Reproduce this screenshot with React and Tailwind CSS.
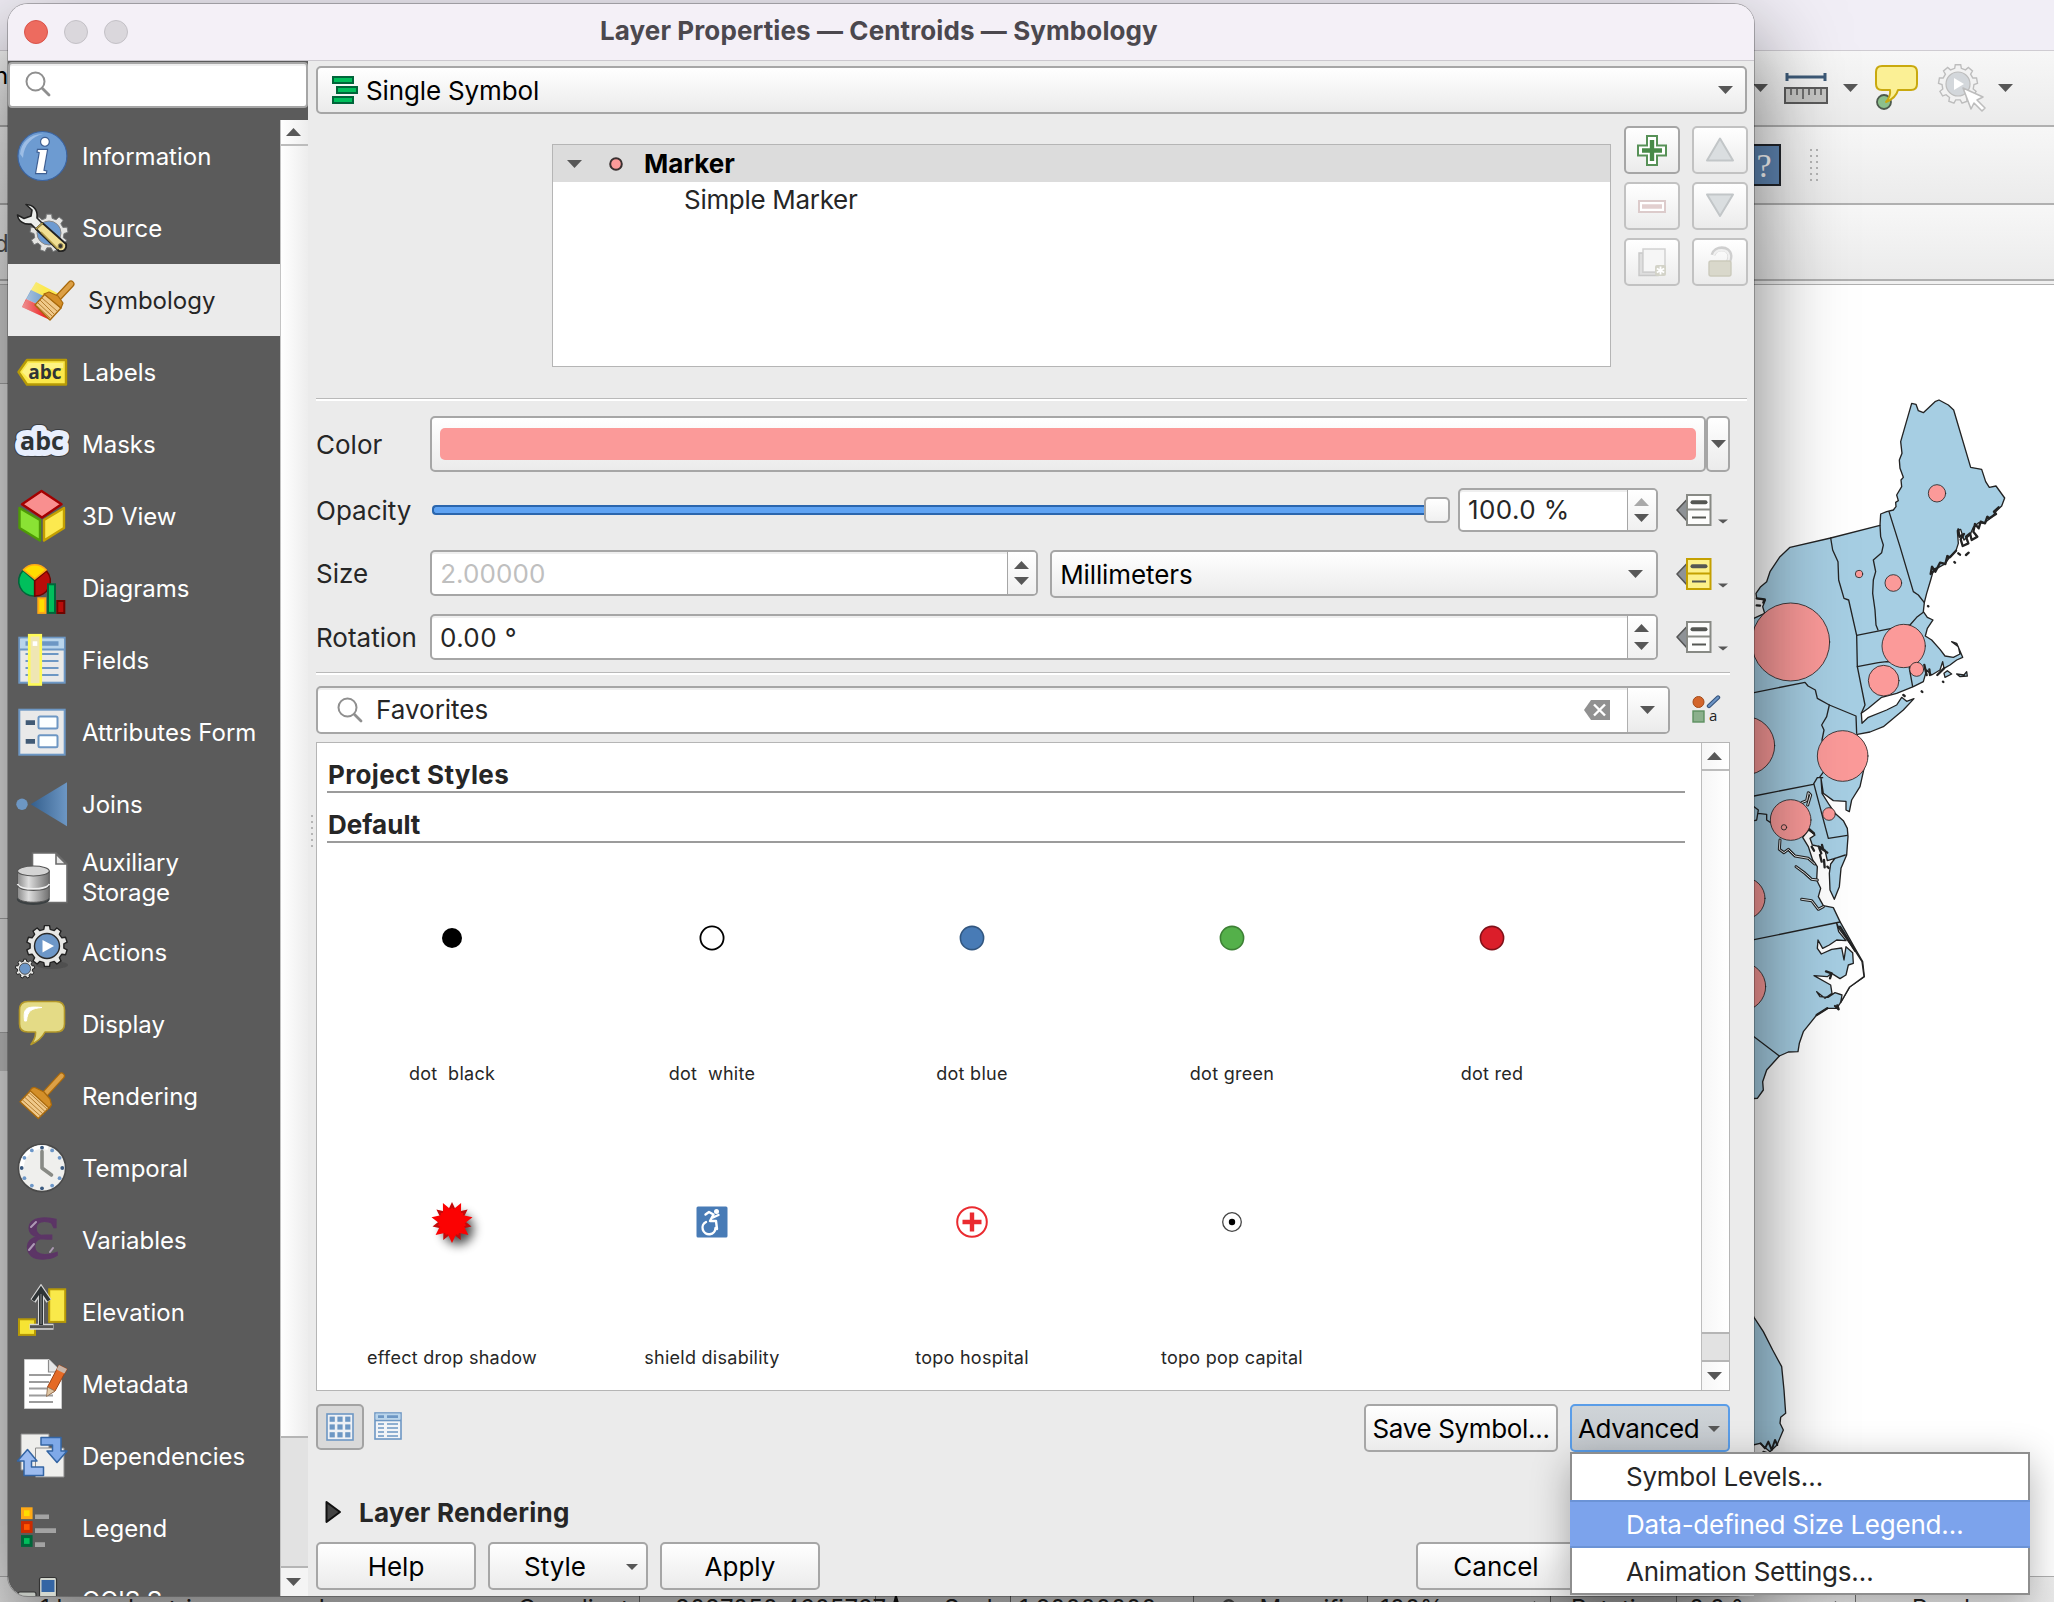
import React from "react";

/* ---------- small shared pieces ---------- */

function Caret({ w = 15, h = 8, up = false, color = "#575757", className = "" }) {
  return (
    <svg width={w} height={h} viewBox="0 0 15 8" preserveAspectRatio="none" className={"shrink-0 " + className}>
      <path d={up ? "M0 8 L7.5 0 L15 8Z" : "M0 0 L15 0 L7.5 8Z"} fill={color} />
    </svg>
  );
}

function gearPath(cx, cy, outer, inner, teeth) {
  const pts = [];
  const step = (Math.PI * 2) / teeth;
  for (let i = 0; i < teeth; i++) {
    const a = i * step - Math.PI / 2;
    [[-0.3, inner], [-0.2, outer], [0.2, outer], [0.3, inner]].forEach(([f, r]) => {
      pts.push(`${(cx + Math.cos(a + f * step) * r).toFixed(2)} ${(cy + Math.sin(a + f * step) * r).toFixed(2)}`);
    });
  }
  return "M" + pts.join("L") + "Z";
}

function Magnifier({ className = "" }) {
  return (
    <svg width="26" height="26" viewBox="0 0 26 26" fill="none" stroke="#8f8f8f" strokeLinecap="round" className={"shrink-0 " + className}>
      <circle cx="10.5" cy="10.5" r="9" strokeWidth="2" />
      <path d="M17.5 17.5 L24 24" strokeWidth="2.8" />
    </svg>
  );
}

function Divider({ className = "" }) {
  return <div className={"h-[3px] shrink-0 border-t border-[#b9b9b9] bg-white " + className} />;
}

const panel = "border-2 border-[#a6a6a6] rounded-[5px] bg-linear-to-b from-white to-[#ebebeb]";
const field = "border-2 border-[#a6a6a6] rounded-[5px] bg-white overflow-hidden shadow-[inset_0_2px_0_#efefef]";

function PushButton({ children, className = "" }) {
  return <div className={panel + " flex h-12 items-center justify-center pt-0.5 text-[26px] leading-none text-black " + className}>{children}</div>;
}

/* ---------- sidebar icons, 56 x 56 ---------- */

function Brush({ handle, bristles, ferrule, lines }) {
  return (
    <g strokeLinejoin="round" strokeLinecap="round">
      <path d={handle} stroke="#a9690c" strokeWidth="7" fill="none" />
      <path d={handle} stroke="#dca046" strokeWidth="4.6" fill="none" />
      <path d={bristles} fill="#f0c98a" stroke="#a9690c" strokeWidth="1.4" />
      <path d={lines} stroke="#b47d30" strokeWidth="1" fill="none" />
      <path d={ferrule} fill="#d48f28" stroke="#a9690c" strokeWidth="1.2" />
    </g>
  );
}

const icons = {
  information: (
    <>
      <circle cx="28.4" cy="28" r="24.5" fill="#6d9bd1" stroke="#3c64a0" strokeWidth="1.2" />
      <path d="M6 26 C7 14 17 5.500 29 6 C18 9 10 16 9 30Z" fill="#a9c6ea" opacity=".8" />
      <text x="28" y="45" textAnchor="middle" fontFamily="Liberation Serif" fontStyle="italic" fontWeight="700" fontSize="50" fill="#fff" stroke="#3f5f92" strokeWidth="2.4" paintOrder="stroke">i</text>
    </>
  ),
  source: (
    <>
      <path d={gearPath(35, 33, 19, 15, 9)} fill="#e4e4e2" stroke="#77797a" strokeWidth="1" />
      <circle cx="35" cy="33" r="12" fill="#6d9bd1" stroke="#888" strokeWidth="1" />
      <path d="M12 4.500 C20 5 24 10 23 18 L29 24 L23 30 L17 24 C10 25 4 21 3.500 15 L10 18.500 L17 16 L18 10Z" fill="#eceeec" stroke="#222" strokeWidth="1.6" strokeLinejoin="round" />
      <path d="M22 29 L28.500 23 L52 44 C53 49 50 52 45 51Z" fill="#f0df94" stroke="#222" strokeWidth="1.8" strokeLinejoin="round" />
      <path d="M27 32 L44 49 M22 29 L28.500 23" stroke="#b8a24e" strokeWidth="1.600" />
      <circle cx="46.500" cy="46" r="2.400" fill="#333" stroke="#9a8a50" strokeWidth="1" />
    </>
  ),
  symbology: (
    <>
      <path d="M16 10 L39 22 L34 30 L10.500 19Z" fill="#fce94f" />
      <path d="M11 18 L36 30 L30 38 L6 27Z" fill="#729fcf" />
      <path d="M6 27 L34 40 L30 48 L2 35Z" fill="#ef2929" />
      <path d="M16 10 L39 22 L30 48 L2 35Z" fill="url(#fade)" />
      <Brush
        handle="M51 12 L36 28"
        bristles="M15 33 L25 22 L41 36 L30 48Z"
        ferrule="M24 22 L29 20 L38 24 L43 31 L41 36Z"
        lines="M18 31 L32 44 M20 28 L34 42 M22 26 L37 39 M17 34 L30 46"
      />
    </>
  ),
  labels: (
    <>
      <path d="M4.500 28 L13 16 H52 V40.500 H13Z" fill="#fbe84a" stroke="#b79a06" strokeWidth="2.400" strokeLinejoin="round" />
      <path d="M8 28 L14.500 19 H49 V24 C35 24 22 28 16 36Z" fill="#fff9a8" opacity=".6" />
      <text x="31" y="34.500" textAnchor="middle" fontFamily="Open Sans" fontWeight="700" fontSize="19" fill="#2e3436">abc</text>
    </>
  ),
  masks: (
    <>
      <text x="28" y="34" textAnchor="middle" fontFamily="Open Sans" fontWeight="700" fontSize="25" fill="#3a3d40" stroke="#3a3d40" strokeWidth="14" strokeLinejoin="round" paintOrder="stroke">abc</text>
      <text x="28" y="34" textAnchor="middle" fontFamily="Open Sans" fontWeight="700" fontSize="25" fill="#e8effd" stroke="#e8effd" strokeWidth="12" strokeLinejoin="round">abc</text>
      <text x="28" y="34" textAnchor="middle" fontFamily="Open Sans" fontWeight="700" fontSize="25" fill="#2e3436">abc</text>
    </>
  ),
  view3d: (
    <g strokeWidth="2.400" strokeLinejoin="round">
      <path d="M5.500 20 L26 32 V52.500 L5.500 40Z" fill="#8ae234" stroke="#4e9a06" />
      <path d="M50 20 L30 32 V52.500 L50 40Z" fill="#fce94f" stroke="#c4a000" />
      <path d="M27.500 3 L47.500 16.300 L28 29.500 L8 16.300Z" fill="#f98f8f" stroke="#a40000" />
    </g>
  ),
  diagrams: (
    <>
      <path d="M20.700 20.700 L9 10.500 A15 15 0 0 0 20.700 36Z" fill="#00bf5c" stroke="#00653a" strokeWidth="1.600" />
      <path d="M20.700 20.700 L20.700 36 A15 15 0 0 0 32.500 11Z" fill="#b90d0a" stroke="#6e0500" strokeWidth="1.600" />
      <path d="M20.700 19 L9.500 9.800 A15 15 0 0 1 32 9.800Z" fill="#ffdd00" stroke="#ffa915" strokeWidth="1.600" />
      <rect x="24.300" y="38.300" width="7" height="14.600" fill="#ffdd00" stroke="#ffa915" strokeWidth="2" />
      <rect x="34" y="24.300" width="7" height="28.600" fill="#00bf5c" stroke="#00653a" strokeWidth="2" />
      <rect x="43.300" y="41" width="7" height="12" fill="#b90d0a" stroke="#6e0500" strokeWidth="2" />
    </>
  ),
  fields: (
    <>
      <rect x="5.300" y="5.700" width="45.400" height="45" fill="#e9e9e9" stroke="#6d97c4" strokeWidth="2" />
      <rect x="6.300" y="6.700" width="43.400" height="10.300" fill="#b9d5ec" />
      <path d="M5 17.500 H51" stroke="#6d97c4" strokeWidth="2" />
      <path d="M11.500 11.500 H44.500" stroke="#6d97c4" strokeWidth="4.600" />
      <path d="M11.500 22 H44.500 M11.500 29 H44.500 M11.500 36 H44.500 M11.500 43 H44.500" stroke="#6d97c4" strokeWidth="2.200" />
      <rect x="15.200" y="3.200" width="11.600" height="49.300" fill="#efe6b4" stroke="#fffb57" strokeWidth="2.600" />
      <rect x="18.700" y="9.300" width="4.600" height="4.600" fill="#fff" />
    </>
  ),
  attributes: (
    <>
      <rect x="5.300" y="5.700" width="45.400" height="45" fill="#e9e9e9" stroke="#6d97c4" strokeWidth="2" />
      <rect x="24.500" y="12.500" width="19" height="12" rx="1.500" fill="#fcffff" stroke="#6d97c4" strokeWidth="2" />
      <rect x="24.500" y="31.300" width="19" height="12" rx="1.500" fill="#fcffff" stroke="#6d97c4" strokeWidth="2" />
      <path d="M11.700 18.700 H21 M11.700 37.300 H21" stroke="#415a75" strokeWidth="4.800" />
    </>
  ),
  joins: (
    <>
      <circle cx="8" cy="28.300" r="5.700" fill="#6d97c4" />
      <path d="M16.700 28.300 L53 6.300 V50.300Z" fill="url(#joinFill)" />
    </>
  ),
  auxiliary: (
    <>
      <path d="M18.500 3 H42 L53 14 V52.500 H18.500Z" fill="#fff" stroke="#6b6b6b" strokeWidth="1.600" />
      <path d="M42 4 V14 H52Z" fill="#e6e6e6" stroke="#6b6b6b" strokeWidth="1.600" />
      <ellipse cx="19.300" cy="49" rx="16.500" ry="6" fill="#3b4042" />
      <path d="M3.500 21 V47 C3.500 54 35.300 54 35.300 47 V21Z" fill="url(#metal)" stroke="#555" strokeWidth="1" />
      <path d="M3.500 34 C6 40.500 33 40.500 35.300 34" fill="none" stroke="#efefef" strokeWidth="1.800" />
      <path d="M3.500 35.600 C6 42 33 42 35.300 35.600" fill="none" stroke="#555" strokeWidth="1.200" />
      <ellipse cx="19.400" cy="21" rx="15.900" ry="5" fill="#d4d4d4" stroke="#555" strokeWidth="1.200" />
    </>
  ),
  actions: (
    <>
      <ellipse cx="38" cy="41" rx="16" ry="4" fill="#444" opacity=".5" />
      <path d={gearPath(33, 22, 20.5, 17, 10)} fill="#e8e8e6" stroke="#222" strokeWidth="1.400" strokeLinejoin="round" />
      <circle cx="33" cy="22" r="12.500" fill="#6d97c8" stroke="#2a2a2a" strokeWidth="1.400" />
      <path d="M28.500 16 L40 22 L28.500 28.500Z" fill="#fff" />
      <path d={gearPath(11, 44.7, 9.6, 7.6, 9)} fill="#e8e8e6" stroke="#222" strokeWidth="1" />
      <circle cx="11" cy="44.700" r="5.600" fill="#6d97c8" stroke="#555" strokeWidth="1" />
    </>
  ),
  display: (
    <>
      <path d="M14 5.500 H42 Q50.500 5.500 50.500 14 V28 Q50.500 36 42 36 H31 Q27 44 17 48.500 Q22 42 21.500 36 H14 Q5.500 36 5.500 28 V14 Q5.500 5.500 14 5.500Z" fill="#e4db86" stroke="#b3982a" strokeWidth="1.600" strokeLinejoin="round" />
      <path d="M10.500 25 C9 12 12 10 28 11.500 C18 12.500 13.500 14 12.500 25Z" fill="#fff" stroke="#fff" strokeWidth="1" />
    </>
  ),
  rendering: (
    <Brush
      handle="M47.500 8 L31 26"
      bristles="M6 33.700 L17 22 L36 39 L24.300 50.500Z"
      ferrule="M16 22.500 C18 19 20 19 22 20 L30 24 L36 31 L37.500 37 L35 40Z"
      lines="M8.500 32 L26.500 48 M11 29.500 L29 46 M13.500 27 L31 43.500 M15 24.500 L33.500 41.500"
    />
  ),
  temporal: (
    <>
      <circle cx="28" cy="28" r="23.600" fill="#efefed" stroke="#4a4a4a" strokeWidth="1.600" />
      <path d="M8 30 A20.500 20.500 0 0 1 34 8" stroke="#fff" strokeWidth="4" fill="none" />
      {Array.from({ length: 12 }, (_, i) => (
        <circle key={i} cx={28 + 20.3 * Math.sin((i * Math.PI) / 6)} cy={28 - 20.3 * Math.cos((i * Math.PI) / 6)} r="1.900" fill={i % 3 === 0 ? "#3a5a80" : "#6d97c8"} />
      ))}
      <path d="M28 11.500 V28 L37.500 35" stroke="#888a85" strokeWidth="3.600" strokeLinecap="round" strokeLinejoin="round" fill="none" />
    </>
  ),
  variables: (
    <>
      <text x="28" y="46" textAnchor="middle" fontFamily="Liberation Serif" fontSize="84" fill="#5c3566" stroke="#5c3566" strokeWidth="1.400">ε</text>
      <path d="M17 15 L22 10 M15 38 L20 32 M36 40 L39 36" stroke="#ad9ab5" strokeWidth="2" strokeLinecap="round" />
    </>
  ),
  elevation: (
    <>
      <rect x="5" y="35.300" width="16" height="15.600" fill="#f6e433" stroke="#b79a06" strokeWidth="2" />
      <rect x="35.200" y="5.300" width="16" height="32.600" fill="#f9e94a" stroke="#b79a06" strokeWidth="2" />
      <path d="M27 41 V8 M19 17 L27 5 L35 17 M15.500 42.700 H39.500" stroke="#d6d6d6" strokeWidth="6" fill="none" />
      <path d="M27 41 V8" stroke="#2e3436" strokeWidth="4" />
      <path d="M19 16.500 L27 5 L35 16.500" stroke="#2e3436" strokeWidth="3.600" fill="none" />
      <path d="M16 42.700 H39" stroke="#555" strokeWidth="3" />
      <path d="M27 10 V40" stroke="#8a8a8a" strokeWidth="1" />
    </>
  ),
  metadata: (
    <>
      <path d="M10.500 3.500 H35 L47.500 16 V52.500 H10.500Z" fill="#fff" stroke="#c9c9c9" strokeWidth="1" />
      <path d="M34.500 4 V16 H47" fill="#e6e6e6" stroke="#8b8b8b" strokeWidth="1.200" />
      <path d="M15 19 H37 M15 26 H35 M15 32.500 H33 M15 39.500 H39 M15 46 H39" stroke="#9c9c9c" strokeWidth="1.800" />
      <path d="M45 9 L53 13 L41 35 L34 39 L33.500 31Z" fill="#e56a26" stroke="#9c4416" strokeWidth="1" />
      <path d="M45 9 L53 13 L50.500 17.500 L42.500 13.500Z" fill="#c9b5a8" />
      <path d="M33.500 31 L41 35 L32.500 40.500Z" fill="#e0c7a4" stroke="#8a6a50" strokeWidth=".8" />
    </>
  ),
  dependencies: (
    <>
      <path d="M7 6 H35 V42 H7Z" fill="#eeeeec" stroke="#8b8b8b" strokeWidth="1" />
      <path d="M21.500 20 H50 V49 H21.500Z" fill="#efefed" stroke="#8b8b8b" strokeWidth="1" />
      <path d="M27 9.500 H47 V23 H53 L43 34.500 L33 23 H38.500 V17 H27Z" fill="#7fa9e8" stroke="#3465a4" strokeWidth="1.500" strokeLinejoin="round" />
      <path d="M10 47.500 V33 H3.500 L13.500 21.500 L23 33 H17.500 V39 H29.500 V47.500Z" fill="#9cbcf0" stroke="#3465a4" strokeWidth="1.500" strokeLinejoin="round" />
    </>
  ),
  legend: (
    <>
      <rect x="8.500" y="8.800" width="8.600" height="8.800" fill="#ffdd00" stroke="#ffa915" strokeWidth="3" />
      <rect x="8.500" y="22.600" width="8.600" height="8.800" fill="#ff5500" stroke="#cc2b00" strokeWidth="3" />
      <rect x="8.500" y="36.600" width="8.600" height="8.800" fill="#00bf5c" stroke="#00653a" strokeWidth="3" />
      <path d="M21 16.700 H35 M21 30.600 H42 M21 44.600 H31" stroke="#a3a3a3" strokeWidth="4.600" />
    </>
  ),
  server: (
    <>
      <rect x="25.500" y="5.500" width="17" height="22" rx="2" fill="#d3d7cf" stroke="#333" strokeWidth="1.200" />
      <rect x="27.500" y="8" width="13" height="12" fill="#3465a4" />
      <rect x="4" y="20" width="18" height="22" rx="2" fill="#bfc3bd" stroke="#333" strokeWidth="1.200" />
    </>
  ),
};

const sections = [
  ["information", "Information"],
  ["source", "Source"],
  ["symbology", "Symbology"],
  ["labels", "Labels"],
  ["masks", "Masks"],
  ["view3d", "3D View"],
  ["diagrams", "Diagrams"],
  ["fields", "Fields"],
  ["attributes", "Attributes Form"],
  ["joins", "Joins"],
  ["auxiliary", "Auxiliary Storage"],
  ["actions", "Actions"],
  ["display", "Display"],
  ["rendering", "Rendering"],
  ["temporal", "Temporal"],
  ["variables", "Variables"],
  ["elevation", "Elevation"],
  ["metadata", "Metadata"],
  ["dependencies", "Dependencies"],
  ["legend", "Legend"],
  ["server", "QGIS Server"],
];

function Sidebar() {
  return (
    <aside className="flex w-[300px] shrink-0 flex-col bg-[#5b5b5b]">
      <div className="mt-px flex h-[46px] shrink-0 items-center rounded-[4px] border-2 border-[#a6a6a6] bg-white pb-0.5 pl-[15px] shadow-[inset_0_2px_0_#efefef]">
        <Magnifier />
      </div>
      <div className="h-3 shrink-0" />
      <div className="flex min-h-0 flex-1">
        <nav className="flex w-[272px] shrink-0 flex-col overflow-hidden">
          {sections.map(([key, label]) => {
            const active = key === "symbology";
            const tall = key === "auxiliary";
            return (
              <div
                key={key}
                className={
                  "flex shrink-0 items-center text-2xl " +
                  (tall ? "h-[76px] leading-[30px] " : "h-[72px] leading-none ") +
                  (active ? "bg-[#ebebeb] pl-3 text-[#262626]" : "pl-1.5 text-white")
                }
              >
                <svg width="56" height="56" viewBox="0 0 56 56" className="shrink-0">{icons[key]}</svg>
                <span className={"ml-3 " + (tall ? "w-[120px] tracking-[-0.1px]" : "pt-0.5 whitespace-nowrap")}>{label}</span>
              </div>
            );
          })}
        </nav>
        <div className="flex w-7 flex-col border-l border-[#c4c4c4] bg-linear-to-r from-white to-[#ededed]">
          <div className="flex h-[26px] shrink-0 items-center justify-center border-b-2 border-[#bcbcbc]"><Caret up className="mr-0.5" /></div>
          <div className="flex-1" />
          <div className="h-[132px] shrink-0 border-y-2 border-[#b5b5b5] bg-[#e2e2e2]" />
          <div className="flex h-7 shrink-0 items-center justify-center bg-[#f4f4f4]"><Caret className="mr-0.5" /></div>
        </div>
      </div>
    </aside>
  );
}

/* ---------- symbol tree and its buttons ---------- */

function ToolButton({ faded = true, children }) {
  return (
    <div className={"flex h-12 w-14 items-center justify-center rounded-[5px] border-2 bg-linear-to-b from-white to-[#ebebeb] " + (faded ? "border-[#c2c2c2]" : "border-[#a6a6a6]")}>
      <svg width="32" height="32" viewBox="0 0 32 32">{children}</svg>
    </div>
  );
}

function SymbolTree() {
  return (
    <div className="flex h-[272px] shrink-0 items-start pl-[236px]">
      <div className="mt-[18px] h-[223px] w-[1059px] shrink-0 border border-[#b5b5b5] bg-white text-[26px] leading-none">
        <div className="flex h-[37px] items-center bg-[#dcdcdc] pl-[14px]">
          <Caret />
          <svg width="16" height="16" viewBox="0 0 16 16" className="ml-[26px]"><circle cx="8" cy="8" r="5.800" fill="#fb9a99" stroke="#3a3030" strokeWidth="2" /></svg>
          <span className="ml-5 font-bold text-black">Marker</span>
        </div>
        <div className="flex h-9 items-center pl-[131px] tracking-[-0.3px] text-[#262626]">Simple Marker</div>
      </div>
      <div className="ml-[13px] grid grid-cols-2 gap-x-3 gap-y-2">
        <ToolButton faded={false}>
          <path d="M11 1.500 H21 V11 H30 V21 H21 V30.500 H11 V21 H2 V11 H11Z" transform="translate(0 .5)" fill="#fff" stroke="#579157" strokeWidth="2" />
          <path d="M16 6 V27 M6 16.500 H26" stroke="#488a48" strokeWidth="4.400" />
        </ToolButton>
        <ToolButton><path d="M16 4.500 L29 26.500 H3Z" fill="#dadee0" stroke="#c2c6c8" strokeWidth="2" strokeLinejoin="round" /></ToolButton>
        <ToolButton>
          <rect x="3" y="11" width="26" height="11" fill="#fff" stroke="#dccbcb" strokeWidth="2" />
          <path d="M6 16.500 H26" stroke="#e2cfcf" strokeWidth="4.400" />
        </ToolButton>
        <ToolButton><path d="M16 26 L29 4.500 H3Z" fill="#dadee0" stroke="#c2c6c8" strokeWidth="2" strokeLinejoin="round" /></ToolButton>
        <ToolButton>
          <path d="M3 7 H7 V26 H22 V29.500 H3Z" fill="#dedede" stroke="#c8c8c8" strokeWidth="1.400" />
          <rect x="7" y="3" width="22" height="23" fill="#f6f6f6" stroke="#cfcfcf" strokeWidth="1.400" />
          <rect x="19" y="19" width="11" height="11" rx="2" fill="#d3d3c8" />
          <path d="M24.500 20.500 V28.500 M20.800 22.500 L28.200 26.500 M28.200 22.500 L20.800 26.500" stroke="#fff" strokeWidth="1.800" />
        </ToolButton>
        <ToolButton>
          <path d="M9 9 C11 1 25 0 26 10 C26.200 13 24.500 15 24 17" stroke="#cfcfcf" strokeWidth="5" fill="none" />
          <path d="M10 9 C12 2.500 24 2 25 10 C25.200 13 24 15 23.500 17" stroke="#f0f0f0" strokeWidth="2.200" fill="none" />
          <rect x="5" y="15" width="22" height="15" rx="2" fill="#d9d8cb" stroke="#cbcabc" strokeWidth="1.400" />
        </ToolButton>
      </div>
    </div>
  );
}

/* ---------- property rows ---------- */

function FieldLabel({ children }) {
  return <span className="w-[114px] shrink-0 pt-0.5 text-[26px] leading-none text-[#262626]">{children}</span>;
}

function Stepper({ upColor = "#575757", gap = "gap-2" }) {
  return (
    <div className={"flex w-[29px] shrink-0 flex-col items-center justify-center self-stretch border-l border-[#a6a6a6] bg-linear-to-b from-white to-[#f0f0f0] pr-0.5 " + gap}>
      <Caret up color={upColor} />
      <Caret />
    </div>
  );
}

function Override({ active = false }) {
  const fill = active ? "#fcf08a" : "#fdfdfc";
  const line = active ? "#c4a000" : "#888a85";
  return (
    <svg width="54" height="34" viewBox="0 0 54 34" className="ml-[17px] shrink-0">
      <path d="M12 6.500 L2 17 L12 28Z" fill="#8e9296" stroke="#555" strokeWidth="1.600" strokeLinejoin="round" />
      <rect x="12" y="2" width="23.500" height="30" fill={fill} stroke={line} strokeWidth="2" />
      <path d="M12 16.500 H35.500" stroke={line} strokeWidth="2" />
      <path d="M17.500 9.200 H30.500" stroke="#555753" strokeWidth="4" strokeLinecap="round" />
      <path d="M17 24.500 H31" stroke="#555753" strokeWidth="2" />
      <path d="M43 26.500 H53 L48 30.500Z" fill="#575757" />
    </svg>
  );
}

function Properties() {
  return (
    <div className="flex shrink-0 flex-col text-[26px] leading-none text-[#262626]">
      <div className="mt-[15px] flex h-14 items-center">
        <FieldLabel>Color</FieldLabel>
        <div className={panel + " h-14 w-[1276px] shrink-0 px-2 py-[10px]"}><div className="h-8 rounded-[5px] bg-[#fb9a99]" /></div>
        <div className={panel + " flex h-14 w-6 shrink-0 items-center justify-center"}><Caret /></div>
      </div>
      <div className="mt-4 flex h-11 items-center">
        <FieldLabel>Opacity</FieldLabel>
        <div className="ml-0.5 flex w-[1018px] shrink-0 items-center pb-px">
          <div className="flex h-[10px] w-[992px] flex-col rounded-l-[4px] border-2 border-r-0 border-[#2b66ad] bg-[#5fa3f3]" />
          <div className="h-[26px] w-[26px] rounded-[5px] border-2 border-[#a6a6a6] bg-linear-to-b from-white to-[#f0f0f0]" />
        </div>
        <div className={field + " ml-2 flex h-11 w-[200px] shrink-0 items-center"}>
          <span className="flex-1 pl-2 tracking-[0.4px]">100.0 %</span>
          <Stepper upColor="#a9a9a9" />
        </div>
        <Override />
      </div>
      <div className="mt-[18px] flex h-12 items-start">
        <div className="mt-[11px]"><FieldLabel>Size</FieldLabel></div>
        <div className={field + " ml-[62px] flex h-[46px] w-[608px] shrink-0 items-center"}>
          <span className="flex-1 pt-0.5 pl-2 tracking-[0.1px] text-[#bfbfbf]">2.00000</span>
          <Stepper />
        </div>
        <div className={panel + " ml-[12px] flex h-12 w-[608px] shrink-0 items-center pl-2"}>
          <span className="flex-1 pt-0.5 tracking-[-0.1px] text-black">Millimeters</span>
          <Caret className="mr-[13px]" />
        </div>
        <div className="mt-[7px]"><Override active /></div>
      </div>
      <div className="mt-4 flex h-[46px] items-center">
        <FieldLabel>Rotation</FieldLabel>
        <div className={field + " flex h-[46px] w-[1228px] shrink-0 items-center"}>
          <span className="flex-1 pt-0.5 pl-2 tracking-[0.4px]">0.00 °</span>
          <Stepper gap="gap-[10px]" />
        </div>
        <Override />
      </div>
    </div>
  );
}

/* ---------- style library ---------- */

function star(spikes, tip, outer, inner) {
  return Array.from({ length: spikes * 2 }, (_, i) => {
    const r = i % 2 === 0 ? outer : inner;
    const a = (i * Math.PI) / spikes + (tip * Math.PI) / 180;
    return `${(32 + r * Math.cos(a)).toFixed(1)},${(32 + r * Math.sin(a)).toFixed(1)}`;
  }).join(" ");
}

const markers = [
  { name: "dot  black", art: <circle cx="32" cy="32" r="10" fill="#000" /> },
  { name: "dot  white", art: <circle cx="32" cy="32" r="11.600" fill="#fff" stroke="#000" strokeWidth="1.800" /> },
  { name: "dot blue", art: <circle cx="32" cy="32" r="11.600" fill="#487bb6" stroke="#325780" strokeWidth="1.600" /> },
  { name: "dot green", art: <circle cx="32" cy="32" r="11.600" fill="#54b04a" stroke="#3d8035" strokeWidth="1.600" /> },
  { name: "dot red", art: <circle cx="32" cy="32" r="11.600" fill="#db1e2a" stroke="#801119" strokeWidth="1.600" /> },
  {
    name: "effect drop shadow",
    art: (
      <>
        <polygon points={star(14, 90, 20, 12)} transform="translate(6 7)" fill="#000" opacity=".7" filter="url(#soft)" />
        <polygon points={star(7, -90, 20, 11)} fill="#c20a0a" />
        <polygon points={star(7, 90, 21, 11.5)} fill="#fb0202" />
        <polygon points={star(14, 90, 14.5, 12)} fill="#fb0202" />
      </>
    ),
  },
  {
    name: "shield disability",
    art: (
      <>
        <rect x="16.500" y="16.500" width="31" height="31" rx="1.500" fill="#487bb6" />
        <g fill="none" stroke="#fff" strokeWidth="2.400" strokeLinecap="round" strokeLinejoin="round">
          <path d="M26 32 A6.500 6.500 0 1 0 35.500 38" />
          <path d="M25.500 24.500 L29 22 L33.500 24.500 L30 31 H36 L37 39 M33 27.500 L38.500 25" />
        </g>
        <circle cx="36.500" cy="21.500" r="2.500" fill="#fff" />
      </>
    ),
  },
  {
    name: "topo hospital",
    art: (
      <>
        <circle cx="32" cy="32" r="14.800" fill="#fff" stroke="#ea2b30" strokeWidth="2" />
        <path d="M32 22.500 V41.500 M22.500 32 H41.500" stroke="#ea2b30" strokeWidth="4.400" />
      </>
    ),
  },
  {
    name: "topo pop capital",
    art: (
      <>
        <circle cx="32" cy="32" r="9.300" fill="#fff" stroke="#444" strokeWidth="1.300" />
        <circle cx="32" cy="32" r="3.200" fill="#000" />
      </>
    ),
  },
];

function StyleLibrary() {
  return (
    <>
      <div className="mt-[11px] flex h-12 shrink-0 items-center">
        <div className={field + " flex h-12 w-[1354px] shrink-0 items-center"}>
          <Magnifier className="ml-[19px]" />
          <span className="ml-[13px] flex-1 text-[26px] leading-none text-[#262626]">Favorites</span>
          <svg width="26" height="20" viewBox="0 0 26 20" className="mr-[17px]">
            <path d="M0 10 L7 0 H26 V20 H7Z" fill="#919191" />
            <path d="M10 4.500 L21 15.500 M21 4.500 L10 15.500" stroke="#fff" strokeWidth="2.400" />
          </svg>
          <div className="flex w-[41px] items-center justify-center self-stretch border-l border-[#b0b0b0] bg-linear-to-b from-white to-[#ebebeb] pr-0.5"><Caret /></div>
        </div>
        <svg width="30" height="30" viewBox="0 0 30 30" className="ml-[21px]">
          <circle cx="7.500" cy="7" r="5.500" fill="#d3652b" stroke="#a44a18" strokeWidth="1" />
          <path d="M18 11 L27 2.500" stroke="#35547d" strokeWidth="4.400" strokeLinecap="round" />
          <path d="M18 11 L27 2.500" stroke="#6b93c4" strokeWidth="2.200" strokeLinecap="round" />
          <rect x="2" y="16" width="11" height="11" fill="#8bb08c" stroke="#5d9160" strokeWidth="1.400" />
          <text x="18" y="26" fontFamily="Open Sans" fontSize="15" fill="#222">a</text>
        </svg>
      </div>
      <div className="mt-2 flex h-[649px] w-[1414px] shrink-0 border border-[#b5b5b5] bg-white">
        <div className="flex flex-1 flex-col pl-[10px] text-[26px] leading-none font-bold text-[#262626]">
          <div className="flex h-[50px] w-[1358px] shrink-0 items-center border-b-2 border-[#9b9b9b] pt-[16px]"><span className="ml-px tracking-[0.35px]">Project Styles</span></div>
          <div className="flex h-[50px] w-[1358px] shrink-0 items-center border-b-2 border-[#9b9b9b] pt-[15px]"><span className="ml-px">Default</span></div>
          <div className="-ml-[5px] grid w-[1300px] grid-cols-5 pt-[63px]">
            {markers.map((m, i) => (
              <div key={m.name} className={"flex flex-col items-center " + (i < 5 ? "h-[284px]" : "h-[200px]")}>
                <svg width="64" height="64" viewBox="0 0 64 64" className="shrink-0 overflow-visible">{m.art}</svg>
                <span className="mt-[95px] text-[18px] font-normal tracking-[0.27px] whitespace-pre">{m.name}</span>
              </div>
            ))}
          </div>
        </div>
        <div className="flex w-7 flex-col border-l border-[#bcbcbc] bg-linear-to-r from-[#f6f6f6] to-white">
          <div className="flex h-7 shrink-0 items-center justify-center border-b-2 border-[#bcbcbc]"><Caret up className="mr-0.5" /></div>
          <div className="flex-1" />
          <div className="h-[30px] shrink-0 border-y-2 border-[#b5b5b5] bg-[#e2e2e2]" />
          <div className="flex h-7 shrink-0 items-center justify-center"><Caret className="mr-0.5" /></div>
        </div>
      </div>
    </>
  );
}

function FooterRows() {
  return (
    <>
      <div className="mt-[13px] flex h-12 w-[1414px] shrink-0 items-start">
        <div className="flex h-[46px] w-12 items-center justify-center rounded-[5px] border-2 border-[#a3a3a3] bg-[#d9d9d9]">
          <svg width="28" height="28" viewBox="0 0 28 28">
            <rect x="1" y="1" width="26" height="26" fill="#eef1f5" stroke="#6d97c4" strokeWidth="1.600" />
            {[3.6, 11.4, 19.2].map((x) => [3.6, 11.4, 19.2].map((y) => <rect key={x + "-" + y} x={x} y={y} width="5.200" height="5.200" fill="#6d97c4" />))}
          </svg>
        </div>
        <svg width="28" height="28" viewBox="0 0 28 28" className="mt-2 ml-[10px]">
          <rect x="1" y="1" width="26" height="26" fill="#f2f4f7" stroke="#6d97c4" strokeWidth="1.600" />
          <rect x="1.600" y="1.600" width="24.800" height="6" fill="#b9d5ec" />
          <path d="M1 8.500 H27" stroke="#6d97c4" strokeWidth="1.600" />
          <path d="M4 4.600 H10 M13 4.600 H24" stroke="#6d97c4" strokeWidth="2.600" />
          <path d="M4 12 H10 M13 12 H24 M4 16 H10 M13 16 H24 M4 20 H10 M13 20 H24 M4 24 H10 M13 24 H24" stroke="#6d97c4" strokeWidth="1.600" />
        </svg>
        <PushButton className="ml-auto w-[194px] tracking-[-0.34px]">Save Symbol...</PushButton>
        <div className="ml-3 flex h-12 w-40 items-center rounded-[5px] border-2 border-[#5a9de8] bg-linear-to-b from-[#cfd4d8] to-[#c3c8cd] pt-0.5 pl-[6px] text-[26px] leading-none text-black">
          <span className="tracking-[-0.4px]">Advanced</span>
          <Caret w={12} h={6} className="mr-[8px] ml-auto" />
        </div>
      </div>
      <div className="mt-[46px] flex h-7 shrink-0 items-center pl-[9px]">
        <svg width="17" height="24" viewBox="0 0 17 24"><path d="M1.500 2 L15 12 L1.500 22Z" fill="#444" stroke="#111" strokeWidth="2" strokeLinejoin="round" /></svg>
        <span className="ml-[17px] pt-0.5 text-[26px] leading-none font-bold tracking-[0.2px] text-[#262626]">Layer Rendering</span>
      </div>
      <div className="mt-4 flex shrink-0 gap-3">
        <PushButton className="w-40">Help</PushButton>
        <PushButton className="w-40 pl-[34px]">
          <span>Style</span>
          <Caret w={12} h={6} className="mr-[8px] ml-auto" />
        </PushButton>
        <PushButton className="w-40">Apply</PushButton>
        <PushButton className="ml-[584px] w-40">Cancel</PushButton>
      </div>
    </>
  );
}

function Dialog() {
  return (
    <div className="absolute top-1 left-2 flex h-[1592px] w-[1746px] flex-col overflow-hidden rounded-[20px] rounded-br-none bg-[#ebebeb]">
      <header className="flex h-[57px] shrink-0 items-center border-b border-[#cbc8ce] bg-[#f4f0f7] pl-4">
        <div className="flex gap-4">
          <span className="h-6 w-6 rounded-full border border-[#d9534a] bg-[#ed6b5f]" />
          <span className="h-6 w-6 rounded-full border border-[#c3c0c6] bg-[#dad7dc]" />
          <span className="h-6 w-6 rounded-full border border-[#c3c0c6] bg-[#dad7dc]" />
        </div>
        <h1 className="ml-[472px] pb-0.5 text-[26px] leading-none font-bold tracking-[0.1px] whitespace-nowrap text-[#4b484e]">Layer Properties — Centroids — Symbology</h1>
      </header>
      <div className="flex min-h-0 flex-1">
        <Sidebar />
        <main className="relative flex min-w-0 flex-1 flex-col pt-[5px] pr-[7px] pl-2">
          <div className={panel + " flex h-12 shrink-0 items-center pr-3 pl-[14px]"}>
            <svg width="26" height="28" viewBox="0 0 26 28">
              <g fill="#00bf5c" stroke="#00653a" strokeWidth="2">
                <rect x="1" y="1" width="20" height="6" />
                <rect x="5" y="11" width="20" height="6" />
                <rect x="1" y="21" width="20" height="6" />
              </g>
            </svg>
            <span className="ml-2 flex-1 pt-0.5 text-[26px] leading-none tracking-[-0.14px] text-black">Single Symbol</span>
            <Caret />
          </div>
          <div className="h-3 shrink-0" />
          <SymbolTree />
          <Divider />
          <Properties />
          <Divider className="mt-3 w-[1414px]" />
          <StyleLibrary />
          <FooterRows />
          <div className="absolute top-[754px] left-[3px] flex flex-col gap-1">
            {Array.from({ length: 6 }, (_, i) => <span key={i} className="h-0.5 w-0.5 bg-[#b5b5b5]" />)}
          </div>
        </main>
      </div>
    </div>
  );
}

/* ---------- map canvas ---------- */

const land =
  "M30 720 L74 700 L68 680 L76 660 L50 655 L48 640 L62 620 L80 605 L90 575 L120 530 L150 502 L272 474 L420 436 L422 402 L440 395 L460 390 L468 380 L467 367 L475 362 L470 345 L485 320 L483 300 L490 292 L480 265 L478 240 L486 220 L482 185 L515 70 L528 73 L535 92 L550 98 L585 65 L597 60 L625 75 L641 90 L692 262 L725 268 L737 305 L748 322 L768 318 L794 354 L785 378 L770 392 L755 412 L732 430 L716 428 L700 442 L690 465 L672 480 L662 448 L652 452 L655 490 L648 512 L630 530 L615 552 L600 560 L580 572 L572 600 L560 640 L553 668 L550 695 L562 712 L579 720 L562 745 L556 768 L575 780 L600 808 L615 828 L640 832 L660 822 L655 800 L635 785 L650 790 L668 832 L650 840 L630 855 L612 865 L608 845 L600 870 L575 885 L560 870 L550 905 L520 920 L470 940 L425 952 L385 985 L364 1000 L366 1030 L385 1012 L440 990 L470 975 L485 952 L500 964 L522 956 L490 990 L430 1040 L390 1056 L352 1063 L345 1070 L360 1110 L375 1150 L370 1175 L360 1220 L335 1260 L328 1295 L318 1290 L318 1264 L280 1262 L250 1240 L243 1195 L246 1240 L268 1275 L285 1300 L310 1322 L322 1345 L324 1370 L320 1425 L303 1465 L298 1520 L283 1558 L270 1530 L268 1480 L272 1452 L285 1435 L262 1442 L255 1410 L240 1400 L217 1395 L210 1375 L225 1365 L206 1350 L188 1372 L205 1400 L218 1440 L232 1460 L230 1500 L242 1525 L235 1550 L250 1577 L280 1583 L300 1625 L345 1705 L368 1745 L373 1790 L330 1820 L300 1870 L290 1885 L262 1885 L230 1905 L190 1955 L178 1990 L174 2015 L145 2016 L118 2028 L80 2070 L68 2105 L70 2130 L52 2155 L30 2156Z";

const borders = [
  "M272 474 L278 510 L294 545 L296 600 L312 655 L326 660 L350 766 L352 860 L372 960 L375 975 L364 1000",
  "M420 436 L422 470 L430 495 L425 518 L400 540 L407 575 L400 600 L398 640 L405 690 L408 735 L414 750",
  "M447 395 L480 500 L520 635 L535 645 L553 668",
  "M350 766 L440 748 L510 735 L530 712 L550 697",
  "M352 860 L415 848 L440 845 L510 850 L508 865 L518 920",
  "M42 938 L195 907 L204 918 L226 930 L232 955 L268 975 L348 1008 L350 1060",
  "M268 975 L260 1010 L245 1035 L252 1050 L246 1080 L252 1110 L270 1150 L240 1190",
  "M42 1248 L220 1213 L232 1193 L248 1193",
  "M222 1213 L265 1375 L322 1366",
  "M42 1679 L300 1626",
  "M42 1970 L118 2028",
  "M42 1280 L55 1290 L50 1320 L44 1322 M55 1300 L80 1303 L80 1320 L92 1328",
  "M285 1435 L316 1425",
];

const inlets = [
  "M120 1380 L118 1408 L132 1418 L145 1408 L165 1428 L205 1435 L224 1452",
  "M168 1460 L195 1480 L215 1498 L232 1500",
  "M185 1558 L215 1562 L235 1588 L250 1580",
  "M185 1268 L200 1262 L205 1238 L212 1245 L203 1275",
];

const sound =
  "M290 1630 L300 1650 L315 1670 L345 1712 L366 1745 L372 1790 L328 1822 L302 1868 L306 1845 L285 1838 L265 1852 L240 1850 L230 1835 L255 1855 L276 1840 L272 1815 L222 1787 L262 1790 L275 1780 L300 1796 L318 1785 L325 1755 L340 1750 L338 1718 L318 1700 L312 1740 L305 1704 L275 1708 L244 1722 L232 1705 L234 1680 L248 1705 L268 1695 L290 1680 L318 1682 L296 1655Z";

const florida =
  "M30 2790 L42 2812 L70 2855 L98 2910 L125 2960 L132 3030 L137 3100 L122 3112 L120 3130 L130 3150 L111 3195 L90 3215 L60 3190 L30 3197Z";

const bubbles = [
  [152, 786, 117], [591, 340, 26], [357, 582, 11], [460, 609, 25], [491, 798, 65], [431, 902, 46], [530, 868, 21],
  [17, 1097, 87], [308, 1128, 76], [152, 1320, 61], [132, 1342, 8], [267, 1302, 19], [13, 1555, 62], [5, 1820, 72],
];

function MapCanvas() {
  return (
    <svg width="300" height="1291" viewBox="1754 285 300 1291" className="block shrink-0 bg-white">
      <g transform="translate(1740 380) scale(.33333)" stroke="#232323" strokeWidth="4" strokeLinejoin="round" strokeLinecap="round">
        <path d={land} fill="#a6cee3" />
        <path d={florida} fill="#a6cee3" />
        <path d={sound} fill="#fff" />
        {borders.map((d) => <path key={d} d={d} fill="none" />)}
        {inlets.map((d) => <path key={d} d={d} fill="none" strokeWidth="9" />)}
        {inlets.map((d) => <path key={d} d={d} fill="none" stroke="#e4e8ea" strokeWidth="3" />)}
        <path d="M776 382 L762 395 L768 402 L748 415 L742 410 L735 430 L722 425 L716 445 L705 432 L700 455 L712 470 L695 480 L690 460 L678 470 L685 490 L668 498 L662 478 L672 462 L658 470 L655 448 M648 512 L630 532 L622 528 L616 552 L600 548 L586 575 L576 560 L572 582 L588 566 M678 525 L686 518 M655 520 L660 524 M643 546 L645 548" fill="none" strokeWidth="7" />
        <path d="M612 880 L622 872 L635 882 L615 892Z M650 882 L672 885 L680 875 L682 888 L660 890Z" fill="#a6cee3" />
        <path d="M553 855 L560 885 M568 868 L570 885 M592 885 L612 865 M545 934 L547 936 M609 905 L610 906 M564 678 L565 679 M490 945 L494 948 M50 655 L74 658 L70 668 M50 676 L60 677" fill="none" strokeWidth="7" />
        <path d="M215 1400 L222 1412 M238 1405 L244 1420 M246 1395 L250 1410 M240 1425 L245 1445 M252 1440 L254 1462 M236 1400 L262 1418 M262 1460 L266 1464 M205 1345 L222 1360 M258 1774 L275 1780 L270 1795 M285 1878 L296 1888 L292 1876 M300 1640 L345 1712 M230 1905 L262 1885" fill="none" strokeWidth="7" />
        <path d="M62 3190 L75 3205 L85 3185 L95 3210 L105 3180 L112 3195 M70 3215 L90 3222" fill="none" strokeWidth="6" />
        {bubbles.map(([cx, cy, r]) => <circle key={cx + "-" + cy} cx={cx} cy={cy} r={r} fill="#fb9a99" strokeWidth="2.500" />)}
      </g>
    </svg>
  );
}

/* ---------- main window behind the dialog ---------- */

const bar = "flex shrink-0 items-center border-b-2 border-[#b0b0b0] bg-linear-to-b from-[#f7f7f7] to-[#ebebeb] ";

function MainWindow() {
  return (
    <div className="flex h-[1602px] w-[2054px] flex-col">
      <div className="h-[51px] shrink-0 border-b border-[#cfccd2] bg-[#f1eef6]" />
      <div className={bar + "h-[76px] justify-between"}>
        <span className="-ml-1.5 -mt-6 text-2xl leading-none text-black">n</span>
        <div className="flex w-[301px] items-center">
          <Caret />
          <svg width="44" height="32" viewBox="0 0 44 32" className="ml-4">
            <path d="M3 5 H41 M3 1 V9 M41 1 V9" stroke="#3d5a78" strokeWidth="3" />
            <rect x="1" y="16" width="42" height="15" fill="#c6c6c4" stroke="#5b5b5b" strokeWidth="2" />
            <path d="M7 17 V23 M13 17 V23 M19 17 V27 M25 17 V23 M31 17 V23 M37 17 V23" stroke="#5b5b5b" strokeWidth="1.600" />
          </svg>
          <Caret className="ml-[15px]" />
          <svg width="46" height="48" viewBox="0 0 46 48" className="ml-4">
            <circle cx="10" cy="38" r="7" fill="#8cc08c" stroke="#4d5a4d" strokeWidth="1.800" />
            <path d="M8 2 H37 Q43 2 43 8 V20 Q43 26 37 26 H24 Q22 34 12 38 Q17 32 16 26 H8 Q2 26 2 20 V8 Q2 2 8 2Z" fill="#fbf095" stroke="#c9a90e" strokeWidth="2" strokeLinejoin="round" />
          </svg>
          <svg width="50" height="50" viewBox="0 0 50 50" className="ml-[17px]">
            <path d={gearPath(21, 21, 19.5, 16, 9)} fill="#f2f2f2" stroke="#bdbdbd" strokeWidth="1.400" />
            <circle cx="21" cy="21" r="12" fill="#d3d7db" stroke="#bdbdbd" strokeWidth="1.200" />
            <path d="M17 15 L27 21 L17 27Z" fill="#fff" />
            <path d="M26 25 L46 34 L40 37 L48 45 L45 48 L37 40 L34 46Z" fill="#fff" stroke="#bdbdbd" strokeWidth="1.600" strokeLinejoin="round" />
          </svg>
          <Caret className="ml-[11px]" />
        </div>
      </div>
      <div className={bar + "h-[78px] pl-[1738px]"}>
        <div className="flex h-[42px] w-[43px] items-center justify-center border-2 border-[#22252b] bg-[#5f86b3] pt-0.5 pl-[9px] font-['Liberation_Serif'] text-[34px] leading-none text-white">?</div>
        <div className="ml-[29px] grid grid-cols-2 gap-1">
          {Array.from({ length: 12 }, (_, i) => <span key={i} className="h-0.5 w-0.5 bg-[#b5b5b5]" />)}
        </div>
      </div>
      <div className={bar + "h-[76px]"}><span className="-ml-1.5 pt-1 text-2xl leading-none text-[#555]">d</span></div>
      <div className="h-1 shrink-0 border-b border-[#b0b0b0] bg-[#f0f0f0]" />
      <div className="flex shrink-0">
        <div className="flex w-[1754px] flex-col bg-[#e9e9e9]">
          <div className="h-[99px] border-b border-[#a8a8a8] bg-[#d8d8d8]" />
          <div className="h-[535px] border-b border-[#a8a8a8]" />
          <div className="h-[114px] border-b border-[#a8a8a8]" />
          <div className="h-[38px] bg-[#c6c6c6]" />
        </div>
        <MapCanvas />
      </div>
      <div className="flex h-[60px] shrink-0 items-center border-t border-[#b0b0b0] bg-linear-to-b from-[#ededed] to-[#e2e2e2] pt-[5px] text-2xl leading-none whitespace-nowrap text-[#222]">
        <span className="w-[518px] pl-10">1 legend entries removed.</span>
        <span className="w-[121px]">Coordinate</span>
        <span className="flex h-full w-[237px] items-center border-x border-[#777] bg-white/40 pl-6">-8087050,4605767</span>
        <span className="flex w-[134px] items-center">
          <svg width="26" height="26" viewBox="0 0 26 26" className="ml-3"><path d="M3 24 L8 4 L13 22 M15 6 V12 M20 6 V12" stroke="#111" strokeWidth="4" fill="none" /></svg>
          <span className="ml-[30px]">Scale</span>
        </span>
        <span className="flex h-full w-[184px] items-center border-x border-[#777] bg-white/40 pl-2">1:20000000</span>
        <span className="flex w-[173px] items-center">
          <svg width="20" height="26" viewBox="0 0 20 26" className="ml-[26px]"><path d="M4 16 V9 A6 6 0 0 1 16 9 V16" stroke="#555" strokeWidth="3" fill="none" /></svg>
          <span className="ml-[22px]">Magnifier</span>
        </span>
        <span className="flex h-full w-[184px] items-center justify-between border-x border-[#777] bg-white/40 pl-3">100%<Caret up className="-mt-2 mr-2" /></span>
        <span className="w-[125px] pl-5">Rotation</span>
        <span className="flex h-full w-[180px] items-center justify-between border-x border-[#777] bg-white/40 pl-3">0.0 °<Caret up className="-mt-2 mr-3" /></span>
        <span className="pl-[56px]">Render</span>
      </div>
    </div>
  );
}

/* ---------- popup menu ---------- */

function AdvancedMenu() {
  return (
    <div className="absolute top-[1452px] left-[1570px] flex h-[143px] w-[460px] flex-col border-2 border-[#8e8e8e] bg-white text-[26px] leading-none tracking-[-0.24px] text-[#262626] shadow-[0_10px_36px_rgba(0,0,0,0.3)]">
      <div className="flex h-[46px] items-center pl-[54px]">Symbol Levels…</div>
      <div className="-mx-0.5 flex h-[48px] items-center border-y-2 border-[#6b93d6] bg-[#7ca3ec] pt-0.5 pl-14 text-white">Data-defined Size Legend…</div>
      <div className="flex flex-1 items-center pt-[3px] pl-[54px]">Animation Settings…</div>
    </div>
  );
}

export default function App() {
  return (
    <div className="relative h-[1602px] w-[2054px] overflow-hidden bg-white font-['Inter',sans-serif]">
      <svg width="0" height="0" className="absolute">
        <defs>
          <linearGradient id="joinFill"><stop offset="0" stopColor="#345f8d" /><stop offset="1" stopColor="#6d97c4" /></linearGradient>
          <linearGradient id="metal"><stop offset="0" stopColor="#8a8a8a" /><stop offset=".35" stopColor="#dedede" /><stop offset="1" stopColor="#6f6f6f" /></linearGradient>
          <linearGradient id="fade"><stop offset="0" stopColor="#ebebeb" stopOpacity=".55" /><stop offset=".6" stopColor="#ebebeb" stopOpacity="0" /></linearGradient>
          <filter id="soft" x="-60%" y="-60%" width="220%" height="220%"><feGaussianBlur stdDeviation="5" /></filter>
        </defs>
      </svg>
      <MainWindow />
      <div className="absolute top-1 left-2 h-[1592px] w-[1746px] rounded-[20px] shadow-[0_0_0_1px_rgba(0,0,0,0.25),0_34px_90px_rgba(0,0,0,0.55)]" />
      <Dialog />
      <AdvancedMenu />
    </div>
  );
}
